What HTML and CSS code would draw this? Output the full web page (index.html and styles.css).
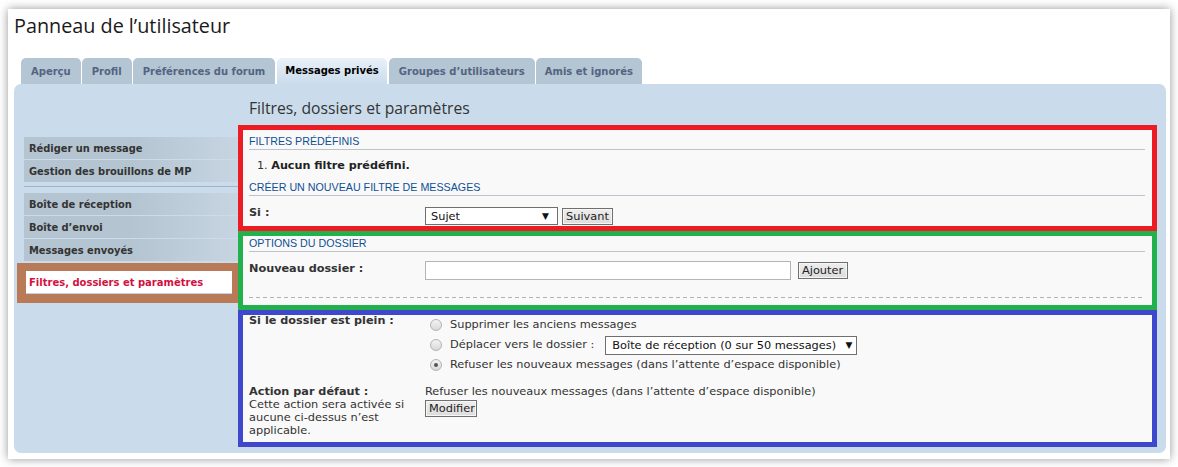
FILE: index.html
```html
<!DOCTYPE html>
<html lang="fr">
<head>
<meta charset="utf-8">
<title>Panneau de l’utilisateur</title>
<link rel="stylesheet" href="styles.css">
</head>
<body>
<div class="frame">
  <h1 class="title">Panneau de l’utilisateur</h1>
  <ul class="tabs">
    <li class="tab">Aperçu</li>
    <li class="tab">Profil</li>
    <li class="tab">Préférences du forum</li>
    <li class="tab tab-active">Messages privés</li>
    <li class="tab">Groupes d’utilisateurs</li>
    <li class="tab">Amis et ignorés</li>
  </ul>
  <div class="panel">
    <div class="side">
      <ul class="menu">
        <li class="item">Rédiger un message</li>
        <li class="item">Gestion des brouillons de MP</li>
        <li class="sep"></li>
        <li class="item">Boîte de réception</li>
        <li class="item">Boîte d’envoi</li>
        <li class="item">Messages envoyés</li>
        <li class="current"><span class="current-inner">Filtres, dossiers et paramètres</span></li>
      </ul>
    </div>
    <div class="main">
      <h2 class="heading">Filtres, dossiers et paramètres</h2>

      <section class="box box-red">
        <h3 class="sub sub-first">FILTRES PRÉDÉFINIS</h3>
        <ol class="rules"><li><strong>Aucun filtre prédéfini.</strong></li></ol>
        <h3 class="sub sub-second">CRÉER UN NOUVEAU FILTRE DE MESSAGES</h3>
        <div class="row row-si">
          <div class="label label-si">Si :</div>
          <div class="field">
            <span class="select select-sujet"><span>Sujet</span><span class="arrow">▼</span></span>
            <span class="btn btn-suivant">Suivant</span>
          </div>
        </div>
      </section>

      <section class="box box-green">
        <h3 class="sub">OPTIONS DU DOSSIER</h3>
        <div class="row row-dossier">
          <div class="label label-dossier">Nouveau dossier :</div>
          <div class="field">
            <span class="textbox"></span>
            <span class="btn btn-ajouter">Ajouter</span>
          </div>
        </div>
        <div class="dashed"></div>
      </section>

      <section class="box box-blue">
        <div class="row row-plein">
          <div class="label">Si le dossier est plein :</div>
          <div class="field options">
            <div class="opt"><span class="radio"></span><span class="opt-text">Supprimer les anciens messages</span></div>
            <div class="opt"><span class="radio"></span><span class="opt-text">Déplacer vers le dossier :</span><span class="select select-boite"><span>Boîte de réception (0 sur 50 messages)</span><span class="arrow">▼</span></span></div>
            <div class="opt"><span class="radio radio-on"></span><span class="opt-text">Refuser les nouveaux messages (dans l’attente d’espace disponible)</span></div>
          </div>
        </div>
        <div class="row row-action">
          <div class="label label-action"><strong>Action par défaut :</strong><br><span class="explain">Cette action sera activée si aucune ci-dessus n’est applicable.</span></div>
          <div class="field action-field">
            <div class="action-text">Refuser les nouveaux messages (dans l’attente d’espace disponible)</div>
            <span class="btn btn-modifier">Modifier</span>
          </div>
        </div>
      </section>
    </div>
  </div>
</div>
</body>
</html>
```

FILE: styles.css
```css
* { box-sizing: border-box; }

body {
  margin: 0;
  padding: 9px 8px 8px 8px;
  background: #ffffff;
  font-family: "DejaVu Sans", Verdana, sans-serif;
  font-size: 11.35px;
  color: #333333;
}

.frame {
  width: 1162px;
  height: 450px;
  background: #ffffff;
  box-shadow: 0 0 9px rgba(0, 0, 0, 0.42);
  padding: 0 4px 6px 6px;
  display: flex;
  flex-direction: column;
}

.title {
  margin: 5px 0 0 0;
  font-family: "Open Sans", "DejaVu Sans", sans-serif;
  font-size: 19.8px;
  line-height: 24px;
  font-weight: normal;
  color: #1a1a1a;
}

.tabs {
  list-style: none;
  margin: 20px 0 0 0;
  padding: 0 0 0 7px;
  display: flex;
  gap: 1px;
  height: 26px;
}

.tab {
  height: 26px;
  padding: 0 10px;
  line-height: 27px;
  font-size: 10px;
  font-weight: bold;
  color: #536482;
  background: #b4c5d4;
  border-radius: 5px 5px 0 0;
  white-space: nowrap;
}

.tab:last-child { padding: 0 9px; }

.tab-active {
  margin: 0 1px 0 1px;
  padding: 0 8px;
  color: #000000;
  background: linear-gradient(#e9f1f9, #cadceb);
  line-height: 25px;
}

.panel {
  flex: 1;
  display: flex;
  background: #cadceb;
  border-radius: 7px;
  padding: 0 9px 0 10px;
}

.side {
  width: 214px;
  padding-top: 53px;
}

.menu {
  list-style: none;
  margin: 0;
  padding: 0;
}

.item {
  height: 22px;
  line-height: 23px;
  margin-bottom: 1px;
  padding-left: 5px;
  font-size: 9.9px;
  font-weight: bold;
  color: #333333;
  background: linear-gradient(to right, #b4c4d1 50%, #c6d5e1 100%);
  white-space: nowrap;
}

.sep {
  height: 1px;
  margin: 4px 0 6px 0;
  background: #a3b3c1;
}

.current {
  margin: 2px -1px 0 -7px;
  padding: 8px 7px 9px 9px;
  background: #b97a57;
}

.current-inner {
  display: block;
  height: 23px;
  line-height: 23px;
  padding-left: 3px;
  background: #ffffff;
  border-bottom: 1px solid #c2d2e0;
  font-size: 10px;
  font-weight: bold;
  color: #d31141;
  white-space: nowrap;
}

.main {
  flex: 1;
  padding-top: 14px;
}

.heading {
  margin: 0 0 7px 0;
  padding-left: 11px;
  font-family: "Open Sans", "DejaVu Sans", sans-serif;
  font-size: 15.7px;
  line-height: 20px;
  font-weight: normal;
  color: #333333;
}

.box {
  border: 5px solid;
  background: #f9f9f9;
  padding: 0 7px 0 6px;
}

.box-red { border-color: #ed1c24; height: 106px; }
.box-green { border-color: #22b14c; height: 79px; }
.box-blue { border-color: #3f48cc; height: 137px; }

.sub {
  margin: 0;
  font-family: "Liberation Sans", Arial, sans-serif;
  font-size: 10.7px;
  line-height: 14px;
  font-weight: normal;
  color: #0f4f94;
  padding-bottom: 1px;
  border-bottom: 1px solid #bcc3cb;
}

.sub-first { margin-top: 4px; }
.sub-second { margin-top: 6px; }

.rules {
  margin: 8px 0 0 0;
  padding: 0 0 0 8px;
  list-style-position: inside;
  line-height: 16px;
  font-size: 11.2px;
  color: #333333;
}

.rules strong { color: #222222; }

.row {
  display: flex;
}

.label {
  width: 176px;
  flex: none;
  font-size: 11.25px;
  font-weight: bold;
  line-height: 12px;
  color: #333333;
}

.field {
  display: flex;
  align-items: center;
}

.row-si { margin-top: 11px; }
.row-si .field { gap: 4px; }

.select {
  display: inline-flex;
  justify-content: space-between;
  align-items: center;
  background: #ffffff;
  border: 1px solid #6f6f6f;
  color: #111111;
  white-space: nowrap;
}

.arrow { font-size: 9px; color: #111111; }

.select-sujet {
  width: 133px;
  height: 18px;
  padding: 0 8px 0 5px;
}

.btn {
  display: inline-block;
  height: 17px;
  line-height: 15px;
  padding: 0 3px;
  background: linear-gradient(#eeeeee, #dcdcdc);
  border: 1px solid #707070;
  box-shadow: inset 0 0 0 1px #f6f6f6;
  color: #222222;
  white-space: nowrap;
}

.btn-suivant { width: 51px; height: 17px; }

.row-dossier { margin-top: 9px; }
.label-dossier { padding-top: 2px; }
.row-dossier .field { gap: 7px; }

.textbox {
  display: inline-block;
  width: 366px;
  height: 19px;
  background: #ffffff;
  border: 1px solid #b5b5b5;
}

.btn-ajouter { width: 50px; }

.dashed {
  height: 1px;
  margin-top: 17px;
  background: repeating-linear-gradient(90deg, #a9b5c2 0 4px, transparent 4px 7px);
}

.options {
  flex-direction: column;
  align-items: flex-start;
}

.opt {
  height: 20px;
  display: flex;
  align-items: center;
}

.radio {
  width: 12px;
  height: 12px;
  margin: 0 8px 0 5px;
  border-radius: 50%;
  border: 1px solid #b3b3b3;
  background: linear-gradient(#f3f3f3, #d9d9d9);
  display: inline-flex;
  align-items: center;
  justify-content: center;
}

.radio-on::after {
  content: "";
  width: 4px;
  height: 4px;
  border-radius: 50%;
  background: #555555;
}

.opt-text {
  color: #333333;
  padding-bottom: 2px;
}

.select-boite {
  width: 252px;
  height: 19px;
  margin-left: 11px;
  padding: 0 4px 0 6px;
}

.row-action { margin-top: 10px; }

.label-action {
  line-height: 13px;
  padding-right: 4px;
}

.explain { font-weight: normal; font-size: 11.35px; }

.action-field {
  flex-direction: column;
  align-items: flex-start;
}

.action-text { line-height: 13px; }

.btn-modifier { margin-top: 2px; width: 52px; }
```
